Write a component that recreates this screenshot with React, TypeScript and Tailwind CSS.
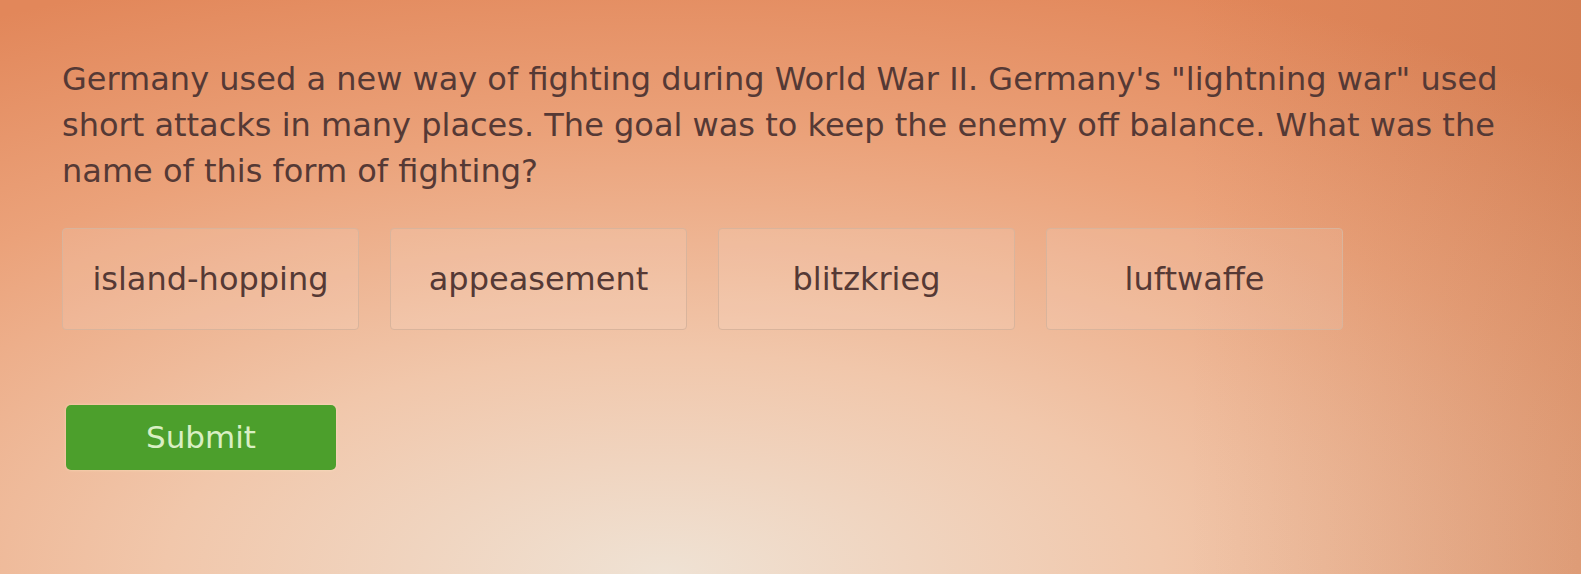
const choices = ["island-hopping", "appeasement", "blitzkrieg", "luftwaffe"];

export default function App() {
  return (
    <div className="h-[574px] w-[1581px] overflow-hidden bg-[radial-gradient(ellipse_90%_110%_at_42%_100%,#efe2d4_0%,#f1c7ab_35%,#eba27a_70%,#e2875a_100%)] font-['DejaVu_Sans',sans-serif] text-[#553935]">
      <div className="relative h-full w-full bg-[linear-gradient(90deg,rgba(0,0,0,0)_75%,rgba(120,70,40,0.12)_100%)] pl-[62px] pt-[56px]">
        <p className="w-[1470px] text-[32px] leading-[46px]">
          Germany used a new way of fighting during World War II. Germany's "lightning war" used short attacks in many places. The goal was to keep the enemy off balance. What was the name of this form of fighting?
        </p>

        <div className="mt-[34px] flex gap-[31px]">
          {choices.map((c) => (
            <button
              key={c}
              className="flex h-[102px] w-[297px] items-center justify-center rounded-[4px] border border-[#d9b49c] bg-white/10 text-[32px] text-[#553935]"
            >
              {c}
            </button>
          ))}
        </div>

        <button className="ml-[4px] mt-[75px] flex h-[65px] w-[270px] items-center justify-center rounded-[5px] bg-[#4c9f2c] text-[31px] text-[#d9efc4] shadow-[0_0_3px_rgba(255,240,200,0.6)]">
          Submit
        </button>
      </div>
    </div>
  );
}
